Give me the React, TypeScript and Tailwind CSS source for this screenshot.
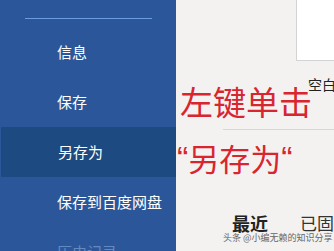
import React from 'react'

const menu = ['信息', '保存', '另存为', '保存到百度网盘', '历史记录']

// ─── Backstage sidebar ─────────────────────────────────────────────
function Sidebar() {
  return (
    <div className="w-[176px] shrink-0 bg-[#2b579a] flex flex-col overflow-hidden">
      <div className="shrink-0 pt-[18px] pl-[25px] pr-[24px] pb-[8px]">
        <div className="h-px bg-[#6b9be0]" />
      </div>
      {menu.map((label, i) => (
        <div
          key={label}
          className={
            i === 2
              ? 'shrink-0 h-[50px] flex items-center pl-[57px] text-[15px] text-white bg-[#1d4a80] ml-px'
              : i === 4
                ? 'shrink-0 h-[50px] flex items-center pl-[57px] text-[15px] text-[#6489c0]'
                : 'shrink-0 h-[50px] flex items-center pl-[57px] text-[15px] text-white'
          }
        >
          {label}
        </div>
      ))}
    </div>
  )
}

export default function App() {
  return (
    <div
      className="w-[334px] h-[251px] overflow-hidden flex relative"
      style={{ fontFamily: '"Noto Sans CJK SC", "Noto Sans", sans-serif' }}
    >
      <Sidebar />

      {/* Main panel */}
      <div className="flex-1 bg-[#f3f2f1] flex flex-col relative">
        <div className="flex justify-end">
          <div className="w-[40px] h-[61px] bg-white border-l border-b border-[#d4d4d4]" />
        </div>
        <div className="pl-[132px] pt-[15px] text-[14px] leading-[16px] text-[#222] whitespace-nowrap">空白</div>
        <div className="ml-[47px] mt-[37px] h-px bg-[#d6d6d6]" />
        <div className="flex items-end gap-[32px] pl-[56px] mt-[83px] whitespace-nowrap">
          <span className="text-[18px] leading-[20px] font-bold text-[#222]">最近</span>
          <span className="text-[17px] leading-[20px] text-[#333]">已固</span>
        </div>
      </div>

      {/* Red annotation */}
      <div className="absolute left-[180px] top-[81px] text-[#d9252f] text-[33px] leading-[40px] whitespace-nowrap">
        左键单击
      </div>
      <div className="absolute left-[177px] top-[138px] text-[#d9252f] text-[31px] leading-[40px] whitespace-nowrap flex items-start">
        <span className="text-[34px]" style={{ fontFamily: '"Liberation Sans", sans-serif' }}>“</span>
        <span>另存为</span>
        <span className="text-[34px]" style={{ fontFamily: '"Liberation Sans", sans-serif' }}>“</span>
      </div>

      {/* Watermark */}
      <div className="absolute left-[223px] top-[232px] text-[9px] leading-[12px] text-[#666] whitespace-nowrap">
        头条 @小编无赖的知识分享
      </div>
    </div>
  )
}
